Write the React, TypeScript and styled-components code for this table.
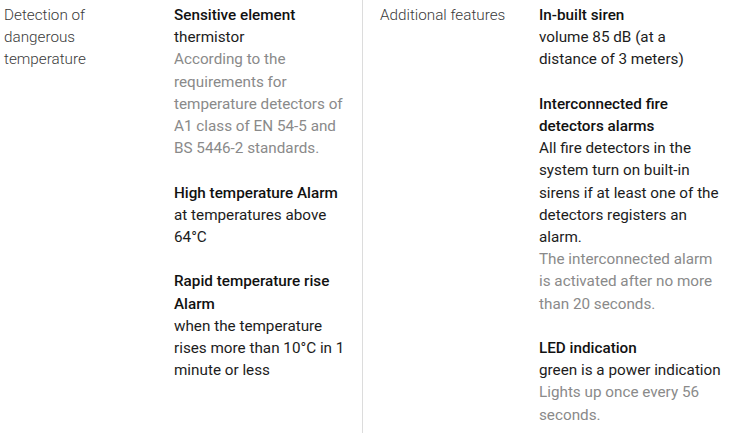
import React from "react";
import styled, { createGlobalStyle } from "styled-components";

const Global = createGlobalStyle`
  html, body { margin: 0; padding: 0; background: #fff; }
  body { font-family: Roboto, "Noto Sans", Arial, sans-serif; -webkit-font-smoothing: antialiased; }
`;

const Page = styled.div`
  display: flex;
  width: 743px;
  height: 435px;
  box-sizing: border-box;
  font-size: 15.25px;
  line-height: 22.2px;
`;

const Section = styled.section<{ $first?: boolean; $labelWidth: number; $valueWidth: number }>`
  display: grid;
  grid-template-columns: ${(p) => p.$labelWidth}px ${(p) => p.$valueWidth}px;
  align-content: start;
  padding: 4px 0 0 ${(p) => (p.$first ? 4 : 17)}px;
  box-sizing: border-box;
  height: 433px;
  ${(p) => (p.$first ? "width: 363px; border-right: 1px solid #dcdcdc;" : "")}
`;

const Label = styled.div`
  font-weight: 300;
  color: #3a3a3a;
  padding-right: 32px;
`;

const Values = styled.div`
  display: flex;
  flex-direction: column;
  gap: 22.2px;
`;

const Block = styled.div``;

const Title = styled.div`
  font-weight: 500;
  color: #111;
`;

const Value = styled.div`
  color: #1c1c1c;
`;

const Note = styled.div`
  color: #8a8a8a;
`;

export default function App() {
  return (
    <>
      <Global />
      <Page>
        <Section $first $labelWidth={170} $valueWidth={175}>
          <Label>Detection of dangerous temperature</Label>
          <Values>
            <Block>
              <Title>Sensitive element</Title>
              <Value>thermistor</Value>
              <Note>According to the requirements for temperature detectors of A1 class of EN 54-5 and BS 5446-2 standards.</Note>
            </Block>
            <Block>
              <Title>High temperature Alarm</Title>
              <Value>at temperatures above 64°C</Value>
            </Block>
            <Block>
              <Title>Rapid temperature rise Alarm</Title>
              <Value>when the temperature rises more than 10°C in 1 minute or less</Value>
            </Block>
          </Values>
        </Section>
        <Section $labelWidth={159} $valueWidth={184}>
          <Label>Additional features</Label>
          <Values>
            <Block>
              <Title>In-built siren</Title>
              <Value>volume 85 dB (at a distance of 3 meters)</Value>
            </Block>
            <Block>
              <Title>Interconnected fire detectors alarms</Title>
              <Value>All fire detectors in the system turn on built-in sirens if at least one of the detectors registers an alarm.</Value>
              <Note>The interconnected alarm is activated after no more than 20 seconds.</Note>
            </Block>
            <Block>
              <Title>LED indication</Title>
              <Value>green is a power indication</Value>
              <Note>Lights up once every 56 seconds.</Note>
            </Block>
          </Values>
        </Section>
      </Page>
    </>
  );
}
